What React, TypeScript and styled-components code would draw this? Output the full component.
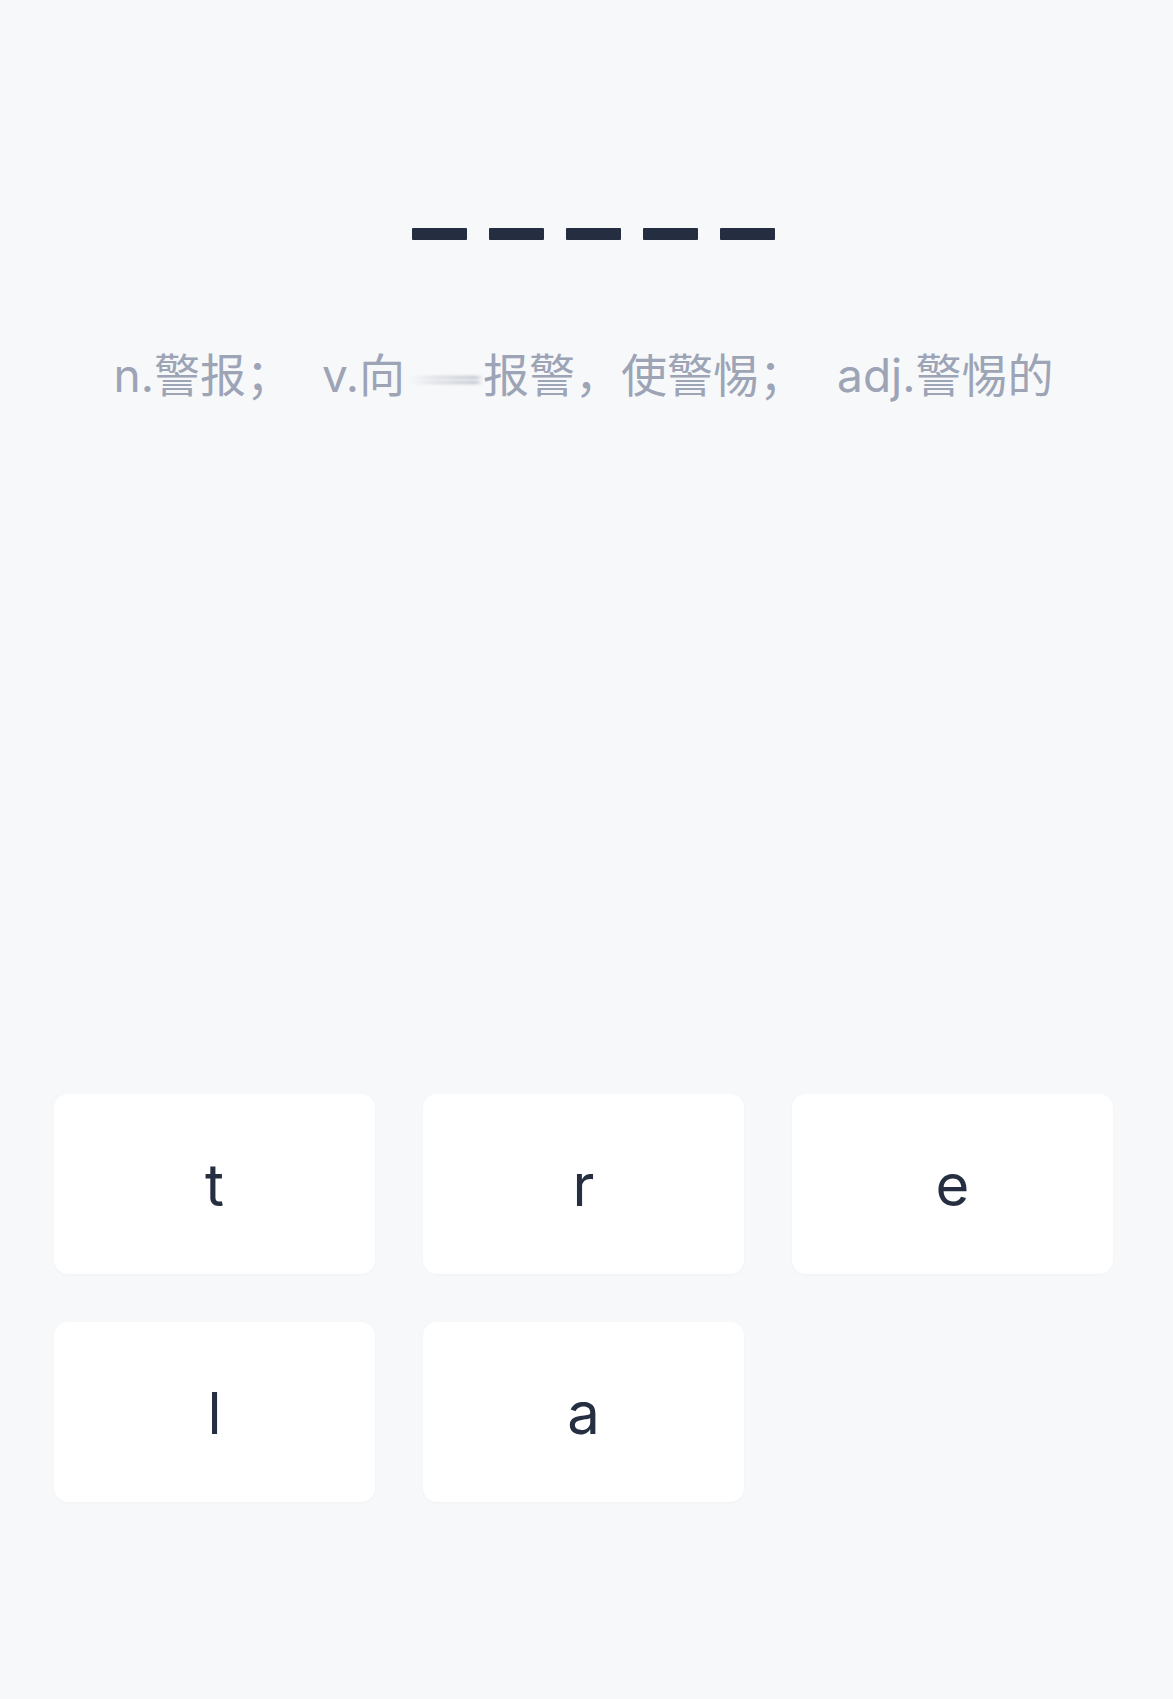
import React from "react";
import styled, { createGlobalStyle } from "styled-components";

const GlobalStyle = createGlobalStyle`
  html, body { margin: 0; padding: 0; background: #f7f8fa; }
  body { font-family: Inter, "Noto Sans CJK SC", sans-serif; }
`;

const Page = styled.div`
  min-height: 100vh;
  box-sizing: border-box;
  display: flex;
  flex-direction: column;
  padding: 0 60px 197px 54px;
  background: #f7f8fa;
`;

const Slots = styled.div`
  margin-top: 228px;
  display: flex;
  justify-content: center;
  gap: 22px;
  padding-left: 19px;
`;

const Dash = styled.span`
  display: block;
  width: 55px;
  height: 12px;
  background: #252d40;
  border-radius: 1px;
`;

const Definition = styled.p`
  margin: 103px 0 0;
  text-align: center;
  font-family: Inter, "Noto Sans CJK SC", sans-serif;
  font-size: 46px;
  line-height: 64px;
  color: #9ca4b6;
  white-space: nowrap;
`;

const Sense = styled.span<{ $gap?: number }>`
  margin-right: ${(p) => p.$gap ?? 0}px;
`;

const Blank = styled.span`
  display: inline-block;
  position: relative;
  width: 78px;
  height: 20px;
  vertical-align: middle;
  &::before,
  &::after {
    content: "";
    position: absolute;
    left: 4px;
    right: 0;
    height: 3px;
    background: linear-gradient(90deg, rgba(200,204,212,0) 0%, rgba(200,204,212,0.6) 35%, rgba(180,185,196,0.85) 90%, rgba(180,185,196,0) 100%);
    filter: blur(1.5px);
  }
  &::before { top: 7px; }
  &::after { top: 12px; }
`;

const Spacer = styled.div`
  flex: 1;
`;

const Grid = styled.div`
  display: grid;
  grid-template-columns: repeat(3, 1fr);
  gap: 48px;
`;

const Key = styled.button`
  height: 180px;
  border: none;
  border-radius: 14px;
  background: #ffffff;
  box-shadow: 0 1px 3px rgba(30, 40, 60, 0.03);
  font-family: Inter, "Noto Sans", sans-serif;
  font-size: 58px;
  font-weight: 400;
  color: #262f42;
  display: flex;
  align-items: center;
  justify-content: center;
  padding: 2px 0 0;
  cursor: pointer;
`;

const letters = ["t", "r", "e", "l", "a"];

export default function App() {
  return (
    <>
      <GlobalStyle />
      <Page>
        <Slots>
          {letters.map((_, i) => (
            <Dash key={i} />
          ))}
        </Slots>
        <Definition>
          <Sense $gap={30}>n.警报；</Sense>
          <Sense>v.向</Sense>
          <Blank />
          <Sense $gap={32}>报警，使警惕；</Sense>
          <Sense>adj.警惕的</Sense>
        </Definition>
        <Spacer />
        <Grid>
          {letters.map((l) => (
            <Key key={l}>{l}</Key>
          ))}
        </Grid>
      </Page>
    </>
  );
}
